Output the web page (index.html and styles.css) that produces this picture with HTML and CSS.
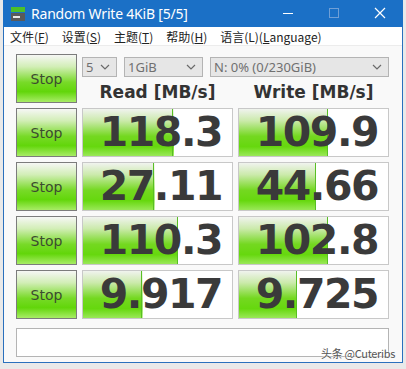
FILE: index.html
```html
<!DOCTYPE html>
<html lang="zh">
<head>
    <meta charset="UTF-8">
    <title>Random Write 4KiB [5/5]</title>
    <link rel="stylesheet" href="styles.css">
</head>
<body>
    <div class="window">
        <div class="titlebar">
            <svg class="app-icon" width="16" height="16" viewBox="0 0 16 16">
                <rect x="1" y="1" width="14" height="5" fill="#4cc02a"/>
                <rect x="1" y="7" width="14" height="8" fill="#5a5a5a"/>
                <rect x="3" y="10" width="7" height="2" fill="#e8e8e8"/>
            </svg>
            <span class="title">Random Write 4KiB [5/5]</span>
            <div class="win-buttons">
                <svg width="46" height="27" viewBox="0 0 46 27"><rect x="18" y="13" width="10" height="1" fill="#fff"/></svg>
                <svg width="46" height="27" viewBox="0 0 46 27"><rect x="18.5" y="8.5" width="9" height="9" fill="none" stroke="#6f9fd6"/></svg>
                <svg width="46" height="27" viewBox="0 0 46 27"><path d="M18 8 L28 18 M28 8 L18 18" stroke="#fff" stroke-width="1.2"/></svg>
            </div>
        </div>
        <div class="menubar">
            <span>文件(<u>F</u>)</span>
            <span>设置(<u>S</u>)</span>
            <span>主题(<u>T</u>)</span>
            <span>帮助(<u>H</u>)</span>
            <span>语言(L)(<u>L</u>anguage)</span>
        </div>

        <div class="client">
            <div class="grid">
                <div class="stop-btn">Stop</div>
                <div class="controls">
                    <div class="selects">
                        <div class="select sel-count">5<svg class="chev" width="10" height="6" viewBox="0 0 10 6"><path d="M1 1 L5 5 L9 1" fill="none" stroke="#6a6a6a" stroke-width="1.2"/></svg></div>
                        <div class="select sel-size">1GiB<svg class="chev" width="10" height="6" viewBox="0 0 10 6"><path d="M1 1 L5 5 L9 1" fill="none" stroke="#6a6a6a" stroke-width="1.2"/></svg></div>
                        <div class="select sel-drive">N: 0% (0/230GiB)<svg class="chev" width="10" height="6" viewBox="0 0 10 6"><path d="M1 1 L5 5 L9 1" fill="none" stroke="#6a6a6a" stroke-width="1.2"/></svg></div>
                    </div>
                    <div class="headers">
                        <div class="head">Read [MB/s]</div>
                        <div class="head">Write [MB/s]</div>
                    </div>
                </div>

                <div class="stop-btn">Stop</div>
                <div class="cell" style="--w: 61%">118.3</div>
                <div class="cell" style="--w: 60%">109.9</div>

                <div class="stop-btn">Stop</div>
                <div class="cell" style="--w: 48%">27.11</div>
                <div class="cell" style="--w: 52%">44.66</div>

                <div class="stop-btn">Stop</div>
                <div class="cell" style="--w: 64%">110.3</div>
                <div class="cell" style="--w: 60%">102.8</div>

                <div class="stop-btn">Stop</div>
                <div class="cell" style="--w: 40%">9.917</div>
                <div class="cell" style="--w: 39%">9.725</div>
            </div>
            <div class="comment"></div>
        </div>
    </div>
    <div class="watermark">头条 @Cuteribs</div>
</body>
</html>
```

FILE: styles.css
```css
* {
    margin: 0;
    padding: 0;
    box-sizing: border-box;
}
body {
    background: #e9e9e9;
    width: 406px;
    height: 369px;
    overflow: hidden;
    position: relative;
    font-family: "Noto Sans", "Noto Sans CJK SC", sans-serif;
}
.window {
    margin-left: 3px;
    width: 400px;
    height: 363px;
    background: #f9f9f9;
    border: 1px solid #2a70bd;
    border-top: none;
}
.titlebar {
    height: 27px;
    background: #1b70c6;
    display: flex;
    align-items: center;
    color: #fff;
    margin: 0 -1px;
}
.app-icon {
    margin-left: 7px;
    margin-right: 5px;
}
.title {
    font-size: 14px;
    letter-spacing: -0.2px;
}
.win-buttons {
    margin-left: auto;
    display: flex;
}
.menubar {
    height: 19px;
    background: #fff;
    display: flex;
    gap: 13px;
    padding-left: 6px;
    align-items: center;
    font-family: "Noto Sans CJK SC", sans-serif;
    font-size: 12px;
    color: #222;
    border-bottom: 1px solid #ececec;
}
.menubar u {
    text-decoration: underline;
    text-underline-offset: 1px;
}
.client {
    padding: 8px 0 0 12px;
}
.grid {
    display: grid;
    grid-template-columns: 61px 151px 151px;
    grid-auto-rows: 49px;
    gap: 5px;
}
.stop-btn {
    border: 1px solid #7c7c7c;
    background: linear-gradient(to bottom, #f6f7f5 0%, #d2eeb6 25%, #78da28 58%, #62d60a 78%, #a8ec66 100%);
    display: flex;
    align-items: center;
    justify-content: center;
    font-family: "DejaVu Sans", sans-serif;
    font-size: 14px;
    color: #3c4c30;
}
.controls {
    grid-column: span 2;
    display: flex;
    flex-direction: column;
    padding-top: 3px;
}
.selects {
    display: flex;
    gap: 7px;
    height: 20px;
}
.select {
    background: #e6e6e6;
    border: 1px solid #b4b4b4;
    font-size: 13px;
    color: #707070;
    display: flex;
    align-items: center;
    padding-left: 3px;
    line-height: 1;
}
.chev {
    margin-left: auto;
    margin-right: 6px;
}
.sel-count { width: 35px; }
.sel-size { width: 79px; }
.sel-drive { width: 179px; }
.headers {
    display: grid;
    grid-template-columns: 151px 151px;
    gap: 5px;
    margin-top: 4px;
}
.head {
    text-align: center;
    font-family: "DejaVu Sans", sans-serif;
    font-weight: bold;
    font-size: 17px;
    color: #333;
    line-height: 22px;
}
.cell {
    border: 1px solid #c8c8c8;
    background:
        linear-gradient(#58bf24, #58bf24) no-repeat,
        linear-gradient(to bottom, #f0f3ee 0%, #cbeaab 25%, #74d820 58%, #66d80e 80%, #9ae858 100%) no-repeat,
        #fff;
    background-size: 1px 100%, var(--w) 100%, auto;
    background-position: calc(var(--w) - 1px) 0, 0 0, 0 0;
    font-family: "DejaVu Sans", sans-serif;
    font-weight: bold;
    font-size: 41px;
    letter-spacing: -1.5px;
    color: #3a3a3a;
    text-align: right;
    padding-right: 10px;
    line-height: 47px;
}
.comment {
    margin-top: 9px;
    width: 373px;
    height: 29px;
    background: #fff;
    border: 1px solid #b4b4b4;
}
.watermark {
    position: absolute;
    left: 321px;
    top: 345px;
    font-family: "Noto Sans CJK SC", sans-serif;
    font-size: 11px;
    letter-spacing: -0.3px;
    color: #555;
    text-shadow: 0 0 2px #fff, 0 0 2px #fff;
}
```
